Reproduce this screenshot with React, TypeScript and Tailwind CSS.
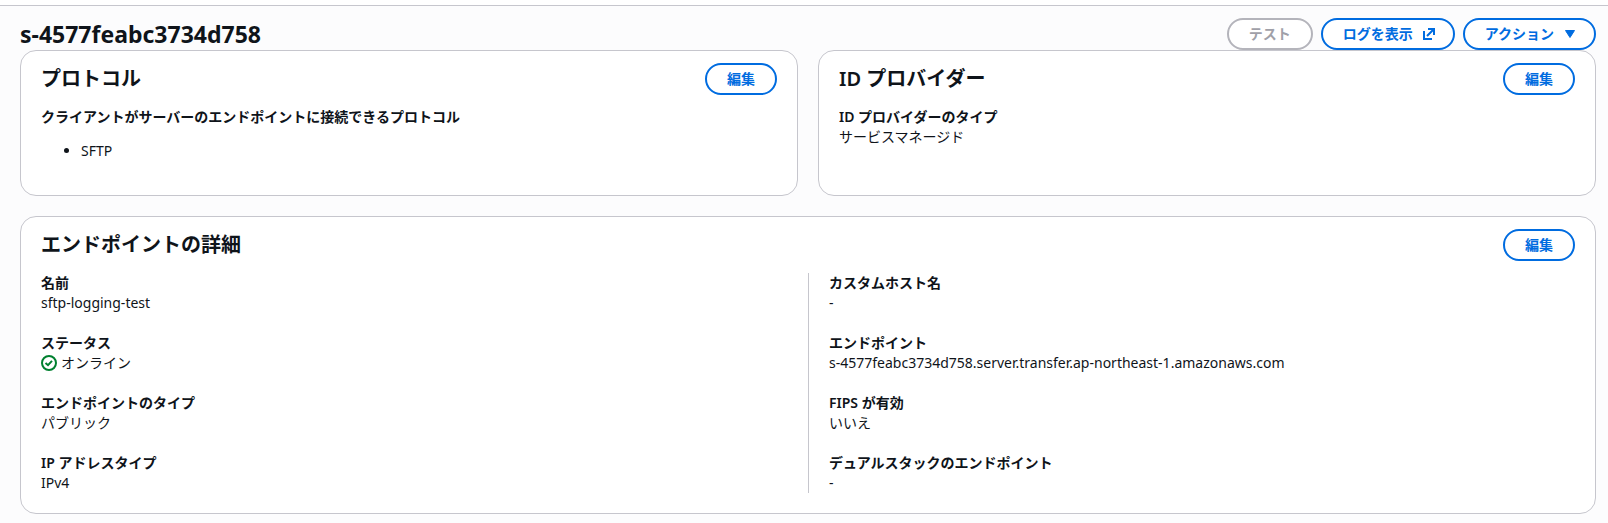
import { ReactNode } from "react";
import clsx from "clsx";

interface ButtonProps {
  children: ReactNode;
  icon?: ReactNode;
  disabled?: boolean;
}

interface Field {
  label: string;
  value: ReactNode;
}

function Button({ children, icon, disabled }: ButtonProps) {
  return (
    <button
      type="button"
      disabled={disabled}
      className={clsx(
        "flex h-8 shrink-0 items-center gap-2 rounded-full border-2 bg-white pl-5 font-semibold",
        icon ? "pr-4" : "pr-5",
        disabled
          ? "border-[#b4b4bb] text-[#a0a0a8]"
          : "border-[#006ce0] text-[#006ce0]"
      )}
    >
      {children}
      {icon}
    </button>
  );
}

function ExternalIcon() {
  return (
    <svg
      viewBox="0 0 16 16"
      className="size-4 fill-none stroke-current stroke-2"
      aria-hidden="true"
    >
      <path d="M7 3h6v6M13 3 6 10M3 5v8h8" />
    </svg>
  );
}

function CaretIcon() {
  return (
    <svg viewBox="0 0 16 16" className="size-4 fill-current" aria-hidden="true">
      <path d="M3.5 4.5h9L8 11.5z" stroke="currentColor" strokeLinejoin="round" />
    </svg>
  );
}

function SuccessIcon() {
  return (
    <svg
      viewBox="0 0 16 16"
      className="size-4 fill-none stroke-[#00802f] stroke-2"
      aria-hidden="true"
    >
      <circle cx="8" cy="8" r="7" />
      <path d="m4.5 8 2.5 2.2 4-4.4" />
    </svg>
  );
}

function Container({ title, children }: { title: string; children: ReactNode }) {
  return (
    <section className="rounded-2xl border border-[#c6c6cd] bg-white px-5 pt-3 pb-5">
      <header className="mb-3 flex items-center justify-between">
        <h2 className="text-xl leading-6 font-semibold">{title}</h2>
        <Button>編集</Button>
      </header>
      {children}
    </section>
  );
}

function FieldList({ fields, divider }: { fields: Field[]; divider?: boolean }) {
  return (
    <dl
      className={clsx(
        "flex flex-col gap-5",
        divider && "border-l border-[#c6c6cd] pl-5"
      )}
    >
      {fields.map(({ label, value }) => (
        <div key={label}>
          <dt className="font-semibold">{label}</dt>
          <dd>{value}</dd>
        </div>
      ))}
    </dl>
  );
}

const provider: Field[] = [
  { label: "ID プロバイダーのタイプ", value: "サービスマネージド" },
];

const endpointLeft: Field[] = [
  { label: "名前", value: "sftp-logging-test" },
  {
    label: "ステータス",
    value: (
      <span className="flex items-center gap-1">
        <SuccessIcon />
        オンライン
      </span>
    ),
  },
  { label: "エンドポイントのタイプ", value: "パブリック" },
  { label: "IP アドレスタイプ", value: "IPv4" },
];

const endpointRight: Field[] = [
  { label: "カスタムホスト名", value: "-" },
  {
    label: "エンドポイント",
    value: "s-4577feabc3734d758.server.transfer.ap-northeast-1.amazonaws.com",
  },
  { label: "FIPS が有効", value: "いいえ" },
  { label: "デュアルスタックのエンドポイント", value: "-" },
];

export default function App() {
  return (
    <div
      lang="ja"
      className="min-h-screen bg-white pt-[5px] font-['Noto_Sans','Noto_Sans_CJK_JP',sans-serif] text-sm leading-5 text-[#0f141a]"
    >
      <main className="min-h-[calc(100vh-5px)] border-t border-[#c6c6cd] bg-[#fcfcfd] pt-3 pr-3 pb-2 pl-5">
        <header className="flex items-center justify-between">
          <h1 className="text-[23px] leading-8 font-bold">s-4577feabc3734d758</h1>
          <div className="flex gap-2">
            <Button disabled>テスト</Button>
            <Button icon={<ExternalIcon />}>ログを表示</Button>
            <Button icon={<CaretIcon />}>アクション</Button>
          </div>
        </header>

        <div className="grid gap-5">
          <div className="grid grid-cols-2 gap-5">
            <Container title="プロトコル">
              <p className="font-semibold">
                クライアントがサーバーのエンドポイントに接続できるプロトコル
              </p>
              <ul className="my-[14px] list-disc pl-10">
                <li>SFTP</li>
              </ul>
            </Container>
            <Container title="ID プロバイダー">
              <FieldList fields={provider} />
            </Container>
          </div>

          <Container title="エンドポイントの詳細">
            <div className="grid grid-cols-2">
              <FieldList fields={endpointLeft} />
              <FieldList fields={endpointRight} divider />
            </div>
          </Container>
        </div>
      </main>
    </div>
  );
}
